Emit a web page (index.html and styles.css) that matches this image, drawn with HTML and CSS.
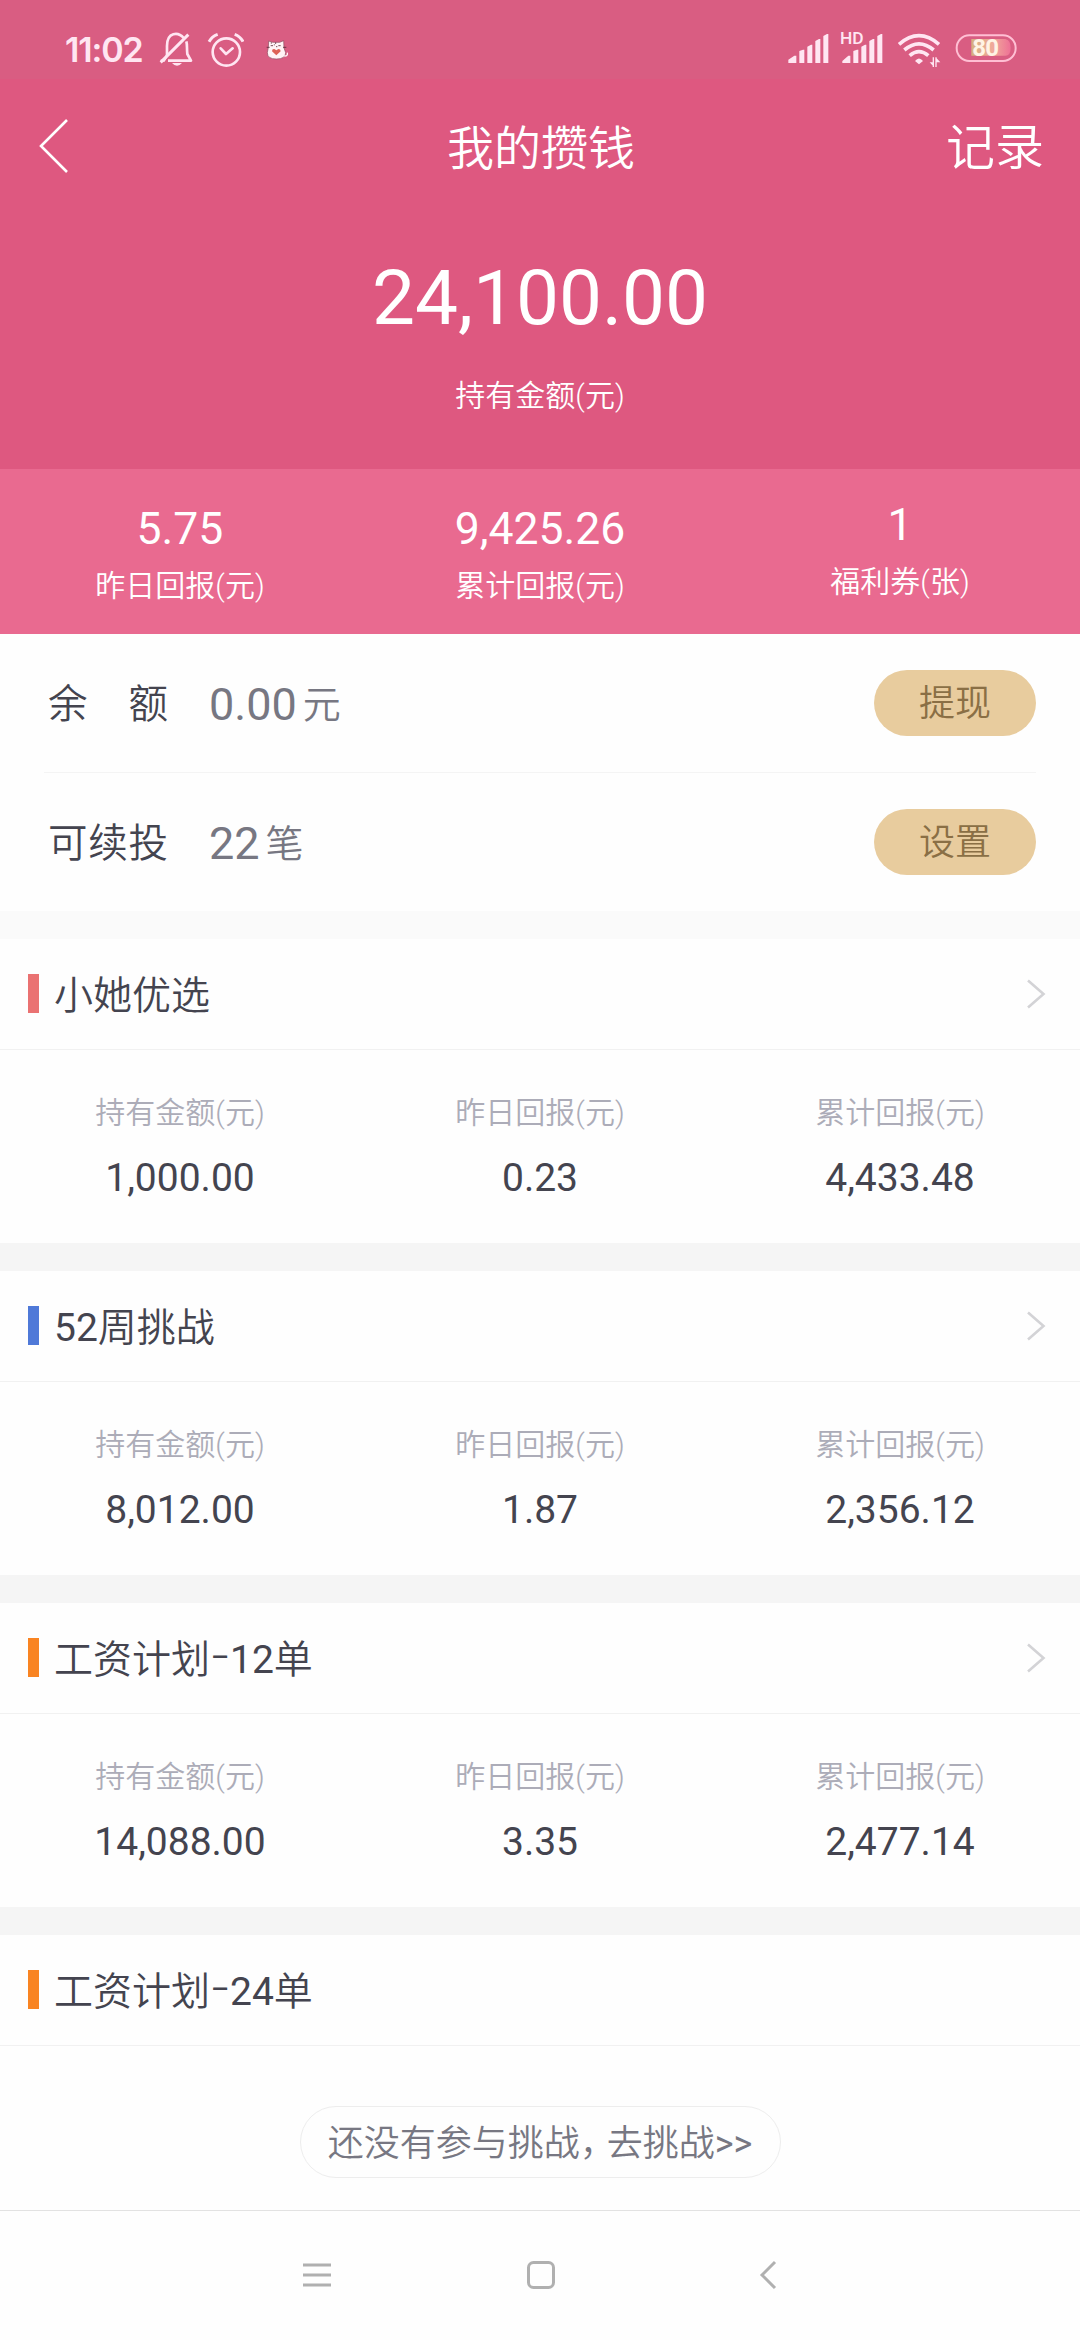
FILE: index.html
```html
<!DOCTYPE html>
<html lang="zh-CN">
<head>
<meta charset="utf-8">
<title>我的攒钱</title>
<link rel="stylesheet" href="styles.css">
</head>
<body>
<header class="hero">
  <div class="status">
    <span class="clock">11:02</span>
    <svg class="bell" viewBox="357 0 102 240" width="34" height="80" fill="none" stroke="#ffe6f2" stroke-width="8">
      <path d="M381 136V108C381 65 415 65 431 84M439 94C442 104 440 112 442 132L453 152H384" stroke-linejoin="round"/>
      <path d="M362 157L445 74" stroke-linecap="butt" stroke-width="9"/>
      <path d="M362 152H372L381 136" stroke-width="7"/>
      <path d="M396 159H426Q411 176 396 159Z" fill="#ffe6f2" stroke="none"/>
    </svg>
    <svg class="alarm" viewBox="500 0 112 240" width="37.33" height="80" fill="none" stroke="#ffe6f2" stroke-width="8">
      <circle cx="558" cy="126" r="41"/>
      <path d="M541 115L557 132L577 115" stroke-linecap="round" stroke-linejoin="round"/>
      <path d="M506 95Q515 79 532 73M583 73Q600 79 608 95" stroke-width="9"/>
    </svg>
    <svg class="cat" viewBox="674 0 72 240" width="24" height="80">
      <path d="M684 112L685 93L697 97H718L730 92L731 114L736 128Q736 147 708 147Q681 147 681 128Z" fill="#fff4f6" stroke="#8b4a5d" stroke-width="2"/>
      <path d="M732 138Q743 139 741 128" fill="none" stroke="#fff4f6" stroke-width="4"/>
      <path d="M708 136L695 124Q695 116 702 117L708 121L714 117Q721 117 721 124Z" fill="#dd6256"/>
      <path d="M691 107H698M702 103V106M714 107H721M707 110H711M679 112H688M728 112H738M693 97V101M706 97V102" stroke="#5b2d3c" stroke-width="2.5"/>
    </svg>
    <svg class="signal" viewBox="50 0 124 240" width="41.33" height="80" fill="#ffe6f2">
      <path d="M51 159V149L69 137H75V159ZM84 159V123L95 119H99V159ZM108 159V110L119 104H123V159ZM132 159V93L143 87H147V159ZM156 159V78L167 72H171V159Z"/>
    </svg>
    <svg class="signal-hd" viewBox="206 0 130 240" width="43.33" height="80" fill="#ffe6f2">
      <path d="M213 159V153L231 137H237V159ZM246 159V123L257 119H261V159ZM270 159V110L281 104H285V159ZM294 159V93L305 87H309V159ZM318 159V78L329 72H333V159Z"/>
      <text class="hd" x="206" y="102" textLength="71" lengthAdjust="spacingAndGlyphs">HD</text>
    </svg>
    <svg class="wifi" viewBox="378 0 134 240" width="44.67" height="80" fill="none" stroke="#ffe6f2" stroke-width="11">
      <path d="M384 103Q444 51 504 103M400 120Q444 83 488 120M416 137Q444 113 472 137"/>
      <path d="M432 153Q444 138 456 153L444 163Z" fill="#ffe6f2" stroke="none"/>
      <path d="M485 171V142H489V171ZM476 157H486V168ZM493 171V142H497V171ZM497 145V157H508Z" fill="#ffe6f2" stroke="none"/>
    </svg>
    <svg class="battery" viewBox="553 0 188 240" width="62.67" height="80">
      <defs><linearGradient id="charge"><stop offset="0" stop-color="#d5b080"/><stop offset=".55" stop-color="#f0a99a"/><stop offset="1" stop-color="#ee7196"/></linearGradient></defs>
      <path d="M602 87H704Q720 90 720 113Q720 137 704 137H602Z" fill="url(#charge)"/>
      <rect x="558" y="76" width="177" height="77" rx="38" fill="none" stroke="#ffbfd4" stroke-width="6"/>
      <text class="level" x="605" y="139" textLength="80">80</text>
    </svg>
  </div>
  <nav class="titlebar">
    <svg class="back" viewBox="0 0 32 56" width="32" height="56" fill="none" stroke="#fff" stroke-width="2.6"><path d="M29 2L3 28L29 54"/></svg>
    <h1>我的攒钱</h1>
    <a class="log">记录</a>
  </nav>
  <div class="total">24,100.00</div>
  <div class="total-label">持有金额(元)</div>
</header>
<section class="summary">
  <div><b>5.75</b><span>昨日回报(元)</span></div>
  <div><b>9,425.26</b><span>累计回报(元)</span></div>
  <div class="coupon"><b>1</b><span>福利券(张)</span></div>
</section>
<section class="account">
  <div class="row">
    <span class="name"><i>余</i><i>额</i></span><span class="num">0.00</span><span class="unit">元</span><a class="btn">提现</a>
  </div>
  <div class="row">
    <span class="name"><i>可</i><i>续</i><i>投</i></span><span class="num">22</span><span class="unit">笔</span><a class="btn">设置</a>
  </div>
</section>
<main class="plans">
  <section class="plan red">
    <h2>小她优选<svg class="more" viewBox="0 0 20 30" width="20" height="30"><path d="M2 1.5L17.5 15L2 28.5"/></svg></h2>
    <div class="stats">
      <div><span>持有金额(元)</span><b>1,000.00</b></div>
      <div><span>昨日回报(元)</span><b>0.23</b></div>
      <div><span>累计回报(元)</span><b>4,433.48</b></div>
    </div>
  </section>
  <section class="plan blue">
    <h2><i class="digits">52</i>周挑战<svg class="more" viewBox="0 0 20 30" width="20" height="30"><path d="M2 1.5L17.5 15L2 28.5"/></svg></h2>
    <div class="stats">
      <div><span>持有金额(元)</span><b>8,012.00</b></div>
      <div><span>昨日回报(元)</span><b>1.87</b></div>
      <div><span>累计回报(元)</span><b>2,356.12</b></div>
    </div>
  </section>
  <section class="plan orange">
    <h2>工资计划<i class="dash">–</i><i class="digits">12</i>单<svg class="more" viewBox="0 0 20 30" width="20" height="30"><path d="M2 1.5L17.5 15L2 28.5"/></svg></h2>
    <div class="stats">
      <div><span>持有金额(元)</span><b>14,088.00</b></div>
      <div><span>昨日回报(元)</span><b>3.35</b></div>
      <div><span>累计回报(元)</span><b>2,477.14</b></div>
    </div>
  </section>
  <section class="plan orange">
    <h2>工资计划<i class="dash">–</i><i class="digits">24</i>单</h2>
    <div class="empty"><a class="join">还没有参与挑战<i class="comma">，</i>去挑战<i class="digits">&gt;&gt;</i></a></div>
  </section>
</main>
<footer class="sysnav">
  <svg viewBox="0 0 28 30" width="28" height="30"><path d="M0 5H28M0 15H28M0 25H28"/></svg>
  <svg viewBox="0 0 30 30" width="30" height="30"><rect x="2.5" y="2.5" width="25" height="25" rx="5"/></svg>
  <svg viewBox="0 0 18 30" width="18" height="30"><path d="M16 2L3 15L16 28"/></svg>
</footer>
</body>
</html>
```
FILE: styles.css
```css
* { box-sizing: border-box; }
body {
  margin: 0;
  width: 1080px;
  height: 2340px;
  overflow: hidden;
  background: #fefefe;
  color: #44444f;
  font-family: Roboto, "Noto Sans CJK SC", sans-serif;
  font-weight: 350;
}
h1, h2, b, i { margin: 0; font-weight: inherit; font-style: normal; }
b, .digits, .total, .num { font-weight: 400; }
svg { display: block; flex: none; }

.hero { height: 469px; background: #de5880; color: #fff; text-align: center; }
.status {
  display: flex;
  height: 79px;
  padding: 10px 0 0 65px;
  background: #d95d82;
}
.status svg { height: 80px; margin-bottom: -11px; }
.clock {
  width: 94px;
  padding-top: 19px;
  font: 600 34px/41px Inter, sans-serif;
  letter-spacing: -1.1px;
  color: #ffe6f2;
  text-align: left;
}
.alarm { margin-left: 13.7px; }
.cat { margin-left: 20.6px; }
.signal { margin-left: 499px; }
.signal-hd { margin-left: 10.7px; }
.wifi { margin-left: 14px; }
.battery { margin-left: 13.7px; }
.hd { font: 500 48px Roboto, sans-serif; }
.level { font: 700 72px Roboto, sans-serif; fill: #fff3e4; }

.titlebar {
  display: grid;
  grid-template-columns: 200px 1fr 200px;
  align-items: center;
  height: 138px;
  padding: 2px 36px 0 38px;
}
.back { margin-top: -6px; }
h1 { font-size: 47px; line-height: 60px; }
.log { font-size: 49px; line-height: 60px; text-align: right; }
.total { margin-top: 36px; font-size: 76.5px; line-height: 90px; }
.total-label { margin-top: 33px; font-size: 30px; line-height: 40px; }

.summary {
  display: grid;
  grid-template-columns: repeat(3, 1fr);
  height: 165px;
  padding-top: 35px;
  background: #e96a90;
  color: #fff;
  text-align: center;
}
.summary b, .summary span { display: block; }
.summary b { font-size: 44.5px; line-height: 50px; }
.summary span { margin-top: 12px; font-size: 30px; line-height: 40px; }
.coupon { margin-top: -4px; }

.account { padding: 0 44px; border-bottom: 28px solid #fafafa; }
.row { display: flex; align-items: center; height: 138px; line-height: 60px; }
.row + .row { height: 139px; border-top: 1px solid #f4f4f4; }
.name, .num, .unit { padding-top: 3px; }
.name { display: flex; justify-content: space-between; width: 120px; margin-left: 4px; font-size: 39.5px; }
.num { margin-left: 41px; font-size: 45px; color: #777782; }
.unit { margin-left: 6px; font-size: 38px; color: #777782; }
.btn {
  margin-left: auto;
  width: 162px;
  height: 66px;
  border-radius: 33px;
  background: #e8cc9e;
  color: #8a6f45;
  font-size: 36px;
  line-height: 69px;
  text-align: center;
}

.plan + .plan { border-top: 28px solid #f5f5f5; }
.plan h2 {
  display: flex;
  align-items: center;
  height: 111px;
  padding: 3px 34px 0 28px;
  border-bottom: 1px solid #f1f1f1;
  font-size: 39px;
  line-height: 60px;
}
.plan + .plan { height: auto; }
.plan h2::before {
  content: "";
  width: 11px;
  height: 39px;
  margin: -4px 15px 0 0;
  background: var(--accent);
}
.red { --accent: #ea7272; }
.blue { --accent: #4f79d8; }
.orange { --accent: #f98422; }
.dash { width: 20px; padding-bottom: 4px; font-size: 28px; font-weight: 500; text-align: center; }
.more { margin: -3px 0 0 auto; fill: none; stroke: #d3d3d6; stroke-width: 2.6; }
.stats { display: grid; grid-template-columns: repeat(3, 1fr); height: 193px; padding-top: 43px; text-align: center; }
.stats span, .stats b { display: block; }
.stats span { font-size: 30px; line-height: 40px; color: #acacb8; }
.stats b { margin-top: 20px; font-size: 39px; line-height: 50px; }

.empty { display: flex; justify-content: center; height: 164px; padding-top: 60px; }
.join {
  width: 481px;
  height: 72px;
  border: 1px solid #ededed;
  border-radius: 36px;
  color: #777782;
  font-size: 36px;
  line-height: 75px;
  text-align: center;
  white-space: nowrap;
}
.comma { letter-spacing: -9px; }

.sysnav {
  display: flex;
  height: 130px;
  padding: 49px 0 0 303px;
  border-top: 1px solid #e2e2e2;
}
.sysnav svg { fill: none; stroke: #b0b0b0; stroke-width: 3; }
.sysnav svg:nth-child(2) { margin-left: 195px; }
.sysnav svg:nth-child(3) { margin-left: 203px; }
```
